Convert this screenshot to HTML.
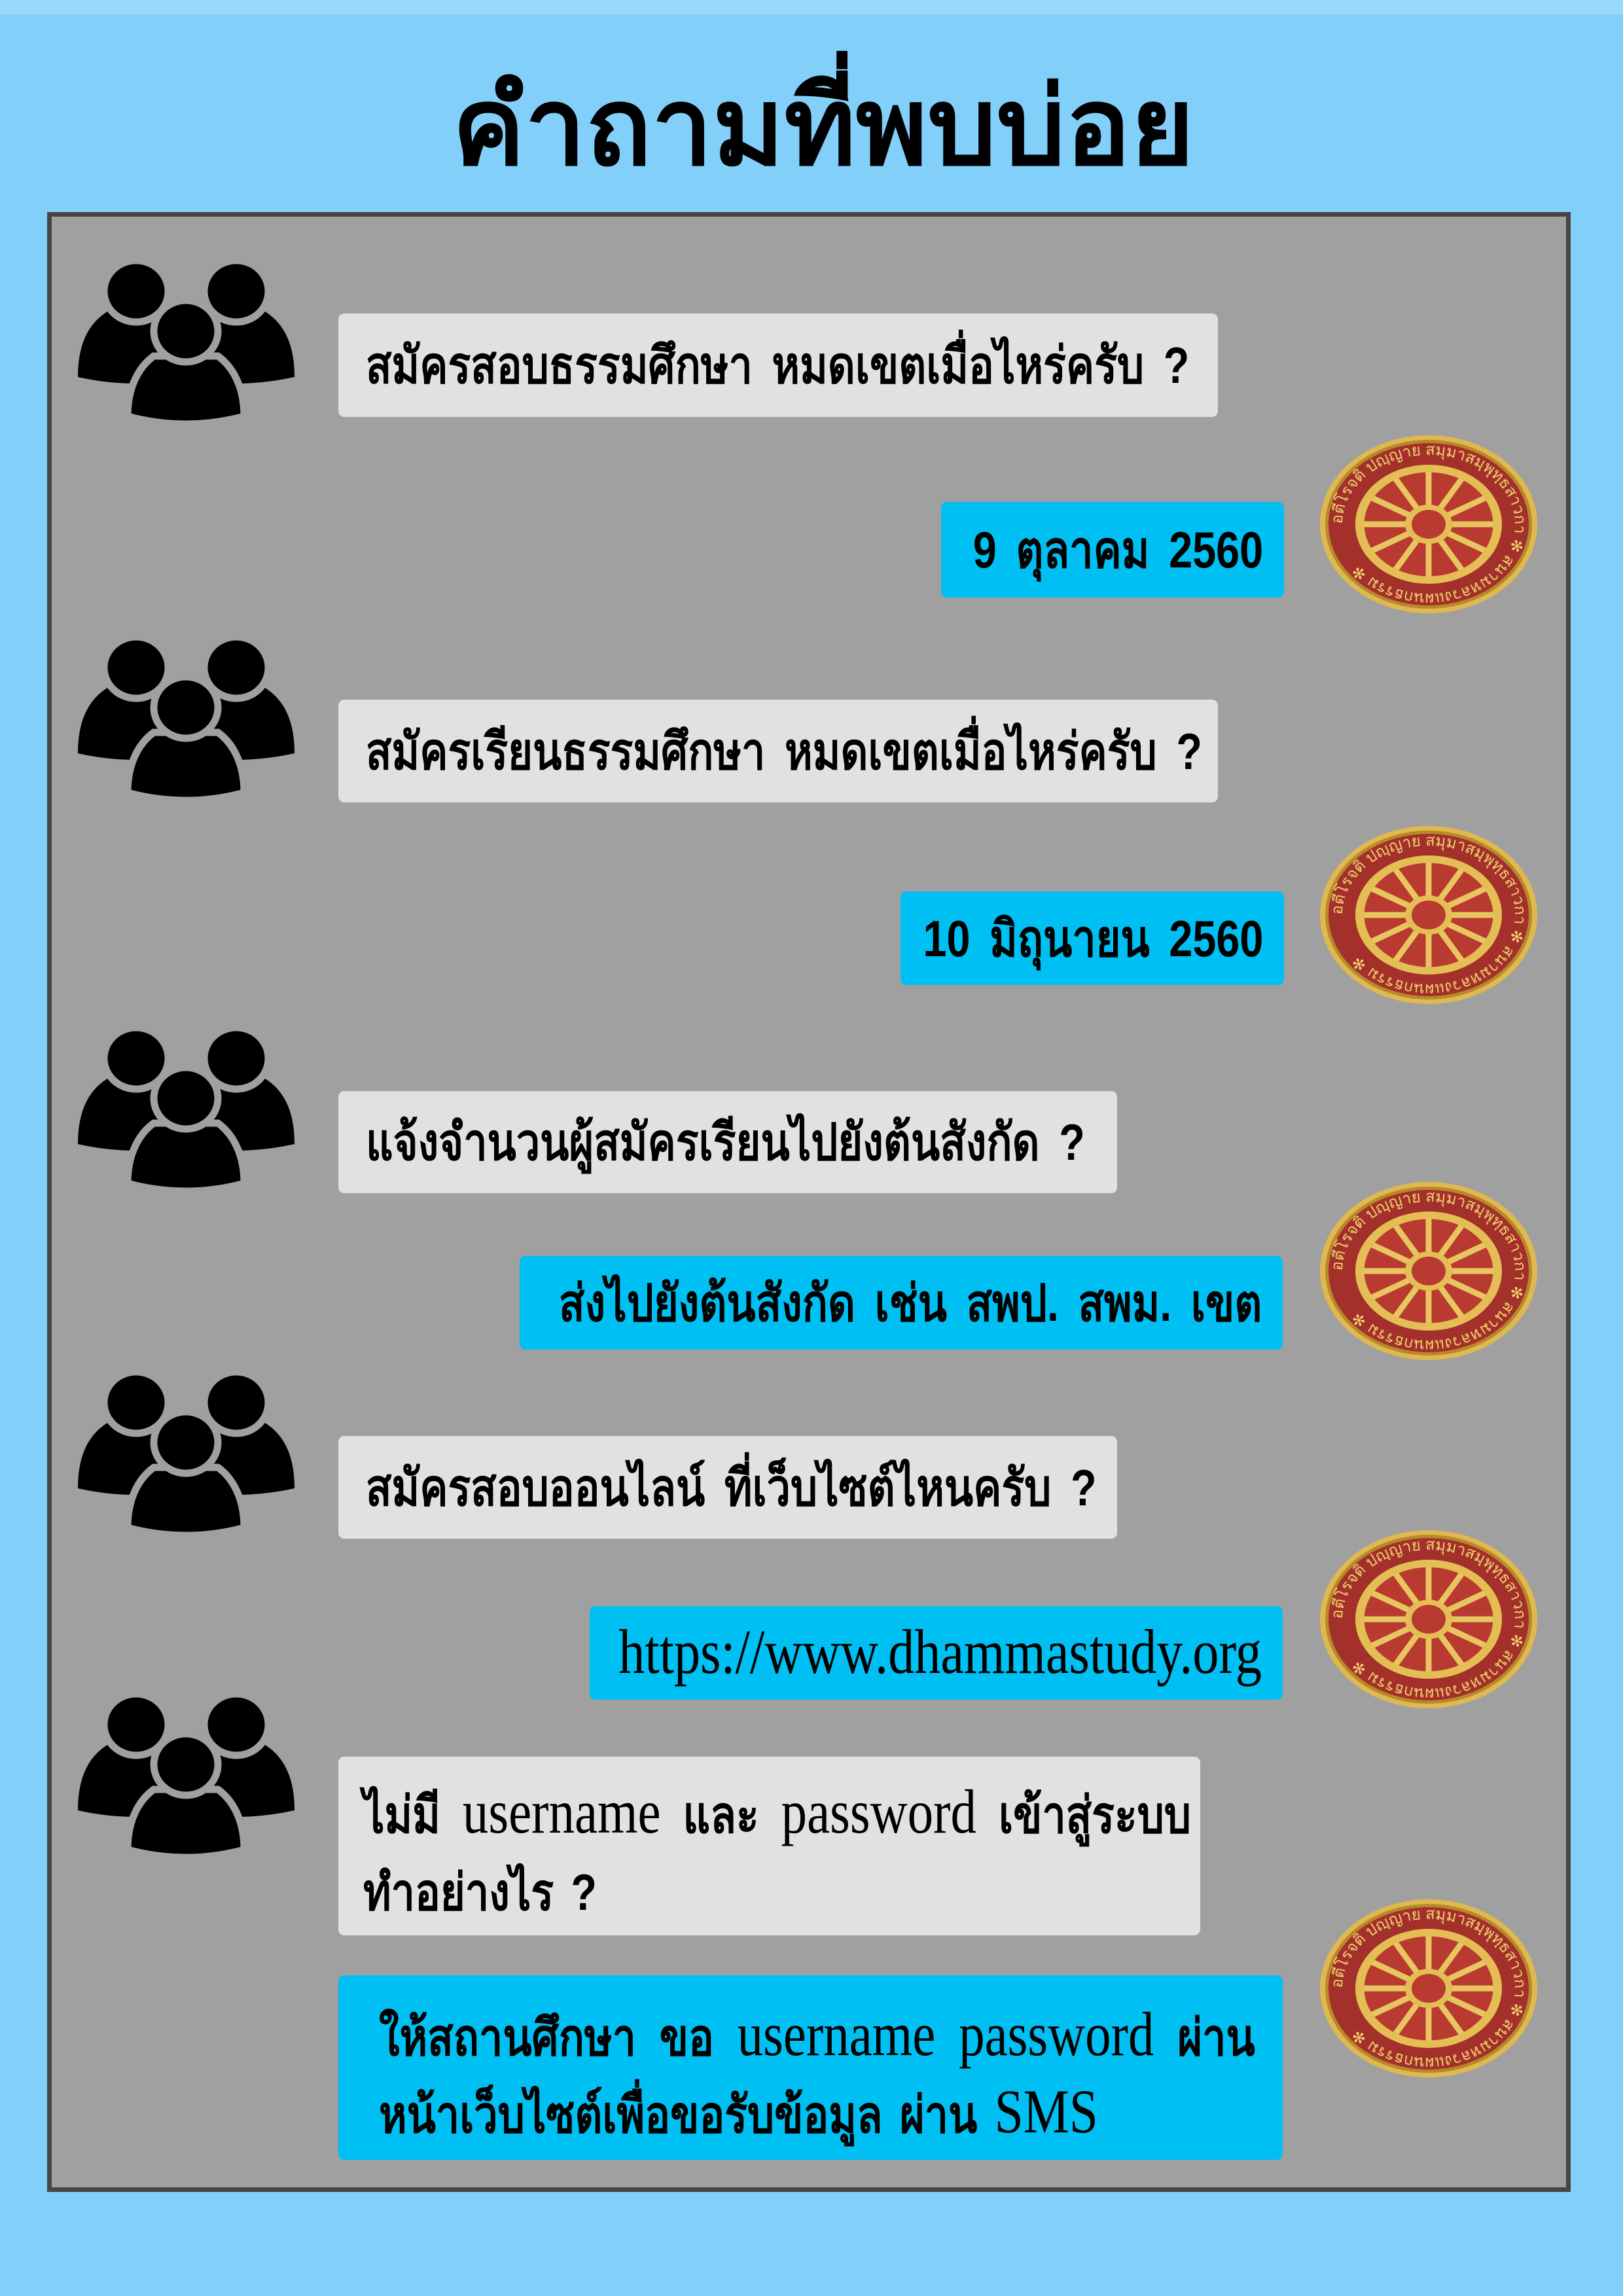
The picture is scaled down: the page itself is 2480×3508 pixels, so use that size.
<!DOCTYPE html>
<html lang="th"><head><meta charset="utf-8">
<style>
html,body{margin:0;padding:0}
body{width:2480px;height:3508px;background:#82cffa;position:relative;overflow:hidden;font-family:"Liberation Sans",sans-serif}
.top{position:absolute;left:0;top:0;width:2480px;height:22px;background:#9bd9fb}
h1{position:absolute;left:18px;top:95px;width:2480px;margin:0;text-align:center;font-size:166px;line-height:200px;font-weight:bold;color:#000}
.panel{position:absolute;left:72px;top:324px;width:2314px;height:3011px;background:#a0a0a0;border:7px solid #454545}
.b{position:absolute;border-radius:9px;font-size:78px;font-weight:bold;color:#000;display:flex;align-items:center;box-sizing:border-box;padding-left:42px;white-space:nowrap}
.t{display:inline-block;transform:scaleX(.83);transform-origin:left center;word-spacing:14px}
.g{background:#e1e1e1}
.bl{background:#00bff2;justify-content:flex-end;padding-right:32px}
.bl .t{transform-origin:right center}
.two{display:block;white-space:normal;padding:0}
.two .in{position:absolute;transform:scaleX(.83);transform-origin:left top;text-align:justify;text-align-last:left;line-height:118px;word-spacing:10px}
.serif{font-family:"Liberation Serif",serif;font-weight:normal;font-size:1.22em;line-height:0}
.icon{position:absolute;left:119px;width:331px;height:251px}
.seal{position:absolute;left:2016px;width:334px;height:274px}
</style></head><body>
<div class="top"></div>
<h1>คำถามที่พบบ่อย</h1>
<div class="panel"></div>

<svg width="0" height="0" style="position:absolute">
<defs>
<g id="ppl">
<path d="M0,178 C0,125 18,95 45,78 L135,78 C160,95 180,125 180,178 Q90,198 0,178Z" fill="#000"/>
<path d="M151,178 C151,125 171,95 196,78 L286,78 C313,95 331,125 331,178 Q241,198 151,178Z" fill="#000"/>
<ellipse cx="89" cy="47" rx="49" ry="47" fill="#000" stroke="#a0a0a0" stroke-width="11"/>
<ellipse cx="242" cy="47" rx="49" ry="47" fill="#000" stroke="#a0a0a0" stroke-width="11"/>
<path d="M76,238 C76,192 94,162 116,146 L214,146 C236,162 254,192 254,238 Q165,262 76,238Z" fill="#000" stroke="#a0a0a0" stroke-width="11"/>
<ellipse cx="165" cy="108" rx="49" ry="47" fill="#000" stroke="#a0a0a0" stroke-width="11"/>
</g>
<g id="seal">
<ellipse cx="167" cy="137" rx="166" ry="136" fill="#e0b850"/>
<ellipse cx="167" cy="137" rx="158" ry="129" fill="#b8892a"/>
<ellipse cx="167" cy="137" rx="153" ry="124" fill="#a3302a"/>
<path id="arc" d="M35,137 A132,106 0 1 1 299,137 A132,106 0 1 1 35,137" fill="none"/>
<text font-size="24" fill="#f0d070" font-family="sans-serif"><textPath href="#arc">อตีโรจติ ปญฺญาย สมุมาสมฺพุทฺธสาวกา ✻ สนามหลวงแผนกธรรม ✻</textPath></text>
<ellipse cx="167" cy="137" rx="112" ry="91" fill="#e4bd55"/>
<ellipse cx="167" cy="137" rx="102" ry="83" fill="#b83a30"/>
<g stroke="#e8c560" stroke-width="9">
<line x1="167" y1="56" x2="167" y2="218"/><line x1="65" y1="137" x2="269" y2="137"/>
<line x1="116" y1="67" x2="218" y2="207"/><line x1="218" y1="67" x2="116" y2="207"/>
<line x1="79" y1="96" x2="255" y2="178"/><line x1="255" y1="96" x2="79" y2="178"/>
</g>
<ellipse cx="167" cy="137" rx="102" ry="83" fill="none" stroke="#e4bd55" stroke-width="7"/>
<ellipse cx="167" cy="137" rx="36" ry="30" fill="#e4bd55"/>
<ellipse cx="167" cy="137" rx="26" ry="22" fill="#b83a30"/>
</g>
</defs></svg>

<svg class="icon" style="top:398px" viewBox="0 0 331 251"><use href="#ppl"/></svg>
<svg class="icon" style="top:973px" viewBox="0 0 331 251"><use href="#ppl"/></svg>
<svg class="icon" style="top:1570px" viewBox="0 0 331 251"><use href="#ppl"/></svg>
<svg class="icon" style="top:2096px" viewBox="0 0 331 251"><use href="#ppl"/></svg>
<svg class="icon" style="top:2588px" viewBox="0 0 331 251"><use href="#ppl"/></svg>

<svg class="seal" style="top:664px" viewBox="0 0 334 274"><use href="#seal"/></svg>
<svg class="seal" style="top:1261px" viewBox="0 0 334 274"><use href="#seal"/></svg>
<svg class="seal" style="top:1805px" viewBox="0 0 334 274"><use href="#seal"/></svg>
<svg class="seal" style="top:2337px" viewBox="0 0 334 274"><use href="#seal"/></svg>
<svg class="seal" style="top:2901px" viewBox="0 0 334 274"><use href="#seal"/></svg>

<div class="b g" style="left:517px;top:479px;width:1344px;height:158px"><span class="t">สมัครสอบธรรมศึกษา หมดเขตเมื่อไหร่ครับ ?</span></div>
<div class="b bl" style="left:1438px;top:767px;width:524px;height:146px"><span class="t">9 ตุลาคม 2560</span></div>
<div class="b g" style="left:517px;top:1069px;width:1344px;height:157px"><span class="t">สมัครเรียนธรรมศึกษา หมดเขตเมื่อไหร่ครับ ?</span></div>
<div class="b bl" style="left:1376px;top:1362px;width:586px;height:143px"><span class="t">10 มิถุนายน 2560</span></div>
<div class="b g" style="left:517px;top:1667px;width:1190px;height:156px"><span class="t">แจ้งจำนวนผู้สมัครเรียนไปยังต้นสังกัด ?</span></div>
<div class="b bl" style="left:794px;top:1919px;width:1166px;height:143px"><span class="t">ส่งไปยังต้นสังกัด เช่น สพป. สพม. เขต</span></div>
<div class="b g" style="left:517px;top:2194px;width:1190px;height:157px"><span class="t">สมัครสอบออนไลน์ ที่เว็บไซต์ไหนครับ ?</span></div>
<div class="b bl" style="left:901px;top:2454px;width:1059px;height:143px"><span class="t"><span class="serif" style="font-size:1.24em;line-height:1">https://www.dhammastudy.org</span></span></div>
<div class="b g two" style="left:517px;top:2684px;width:1317px;height:273px"><div class="in" style="left:38px;top:30px;width:1524px">ไม่มี <span class="serif">username</span> และ <span class="serif">password</span> เข้าสู่ระบบ ทำอย่างไร ?</div></div>
<div class="b bl two" style="left:517px;top:3018px;width:1443px;height:282px"><div class="in" style="left:62px;top:36px;width:1613px">ให้สถานศึกษา ขอ <span class="serif">username</span> <span class="serif">password</span> ผ่าน หน้าเว็บไซต์เพื่อขอรับข้อมูล ผ่าน <span class="serif">SMS</span></div></div>
</body></html>
